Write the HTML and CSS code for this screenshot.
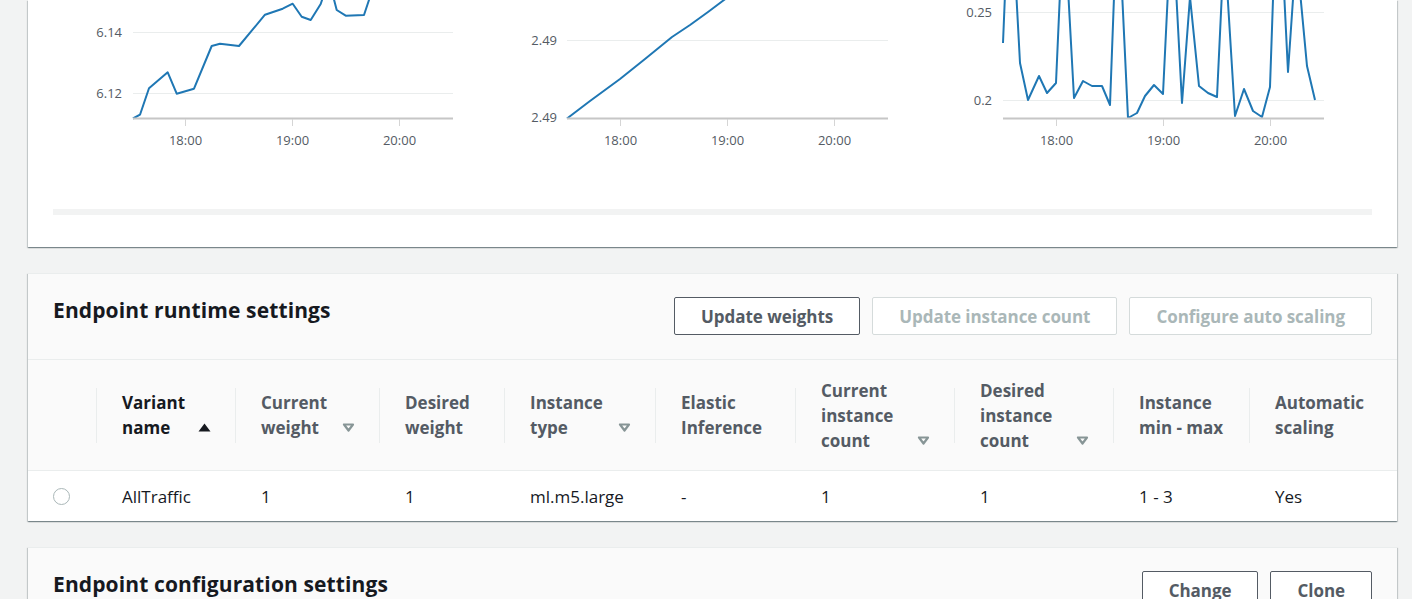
FILE: index.html
```html
<!DOCTYPE html>
<html lang="en">
<head>
<meta charset="utf-8">
<title>Endpoint</title>
<link rel="stylesheet" href="styles.css">
</head>
<body>
<div class="page">
  <section class="card card-metrics">
    <div class="charts">
      <svg class="chart" width="435" height="160" viewBox="53 0 435 160">
        <line class="grid" x1="133" x2="453" y1="32.5" y2="32.5"/>
        <line class="grid" x1="133" x2="453" y1="93.5" y2="93.5"/>
        <text class="ylab" x="122" y="37">6.14</text>
        <text class="ylab" x="122" y="97.5">6.12</text>
        <polyline class="series" points="133,118.5 140,114.7 149,88.3 167.7,72.3 176.7,93.7 194,88.7 211.7,46 220,43.7 239,46 265,14.7 282.7,8.7 292.7,3.7 301.7,16.7 310.7,20 320.7,4 326,-12 331,-12 336.7,10 345.7,15.7 364,15 369,0 373,-20 395,-28 453,-22"/>
        <line class="axis" x1="133" x2="453" y1="118.5" y2="118.5"/>
        <line class="tick" x1="185.5" x2="185.5" y1="119" y2="126"/>
        <line class="tick" x1="292.5" x2="292.5" y1="119" y2="126"/>
        <line class="tick" x1="399.5" x2="399.5" y1="119" y2="126"/>
        <text class="xlab" x="185.5" y="145">18:00</text>
        <text class="xlab" x="292.5" y="145">19:00</text>
        <text class="xlab" x="399.5" y="145">20:00</text>
      </svg>
      <svg class="chart" width="435" height="160" viewBox="488 0 435 160">
        <line class="grid" x1="567" x2="888" y1="40.5" y2="40.5"/>
        <text class="ylab" x="557" y="45">2.49</text>
        <text class="ylab" x="557" y="122">2.49</text>
        <polyline class="series" points="567,118.5 590,101 620,79 645,59 672,37 690,25 708,12 724,0 750,-20 780,-40"/>
        <line class="axis" x1="567" x2="888" y1="118.5" y2="118.5"/>
        <line class="tick" x1="620.5" x2="620.5" y1="119" y2="126"/>
        <line class="tick" x1="727.5" x2="727.5" y1="119" y2="126"/>
        <line class="tick" x1="834.5" x2="834.5" y1="119" y2="126"/>
        <text class="xlab" x="620.5" y="145">18:00</text>
        <text class="xlab" x="727.5" y="145">19:00</text>
        <text class="xlab" x="834.5" y="145">20:00</text>
      </svg>
      <svg class="chart" width="435" height="160" viewBox="923 0 435 160">
        <line class="grid" x1="1003" x2="1324" y1="12.5" y2="12.5"/>
        <line class="grid" x1="1003" x2="1324" y1="100.5" y2="100.5"/>
        <text class="ylab" x="992" y="17">0.25</text>
        <text class="ylab" x="992" y="105">0.2</text>
        <polyline class="series" points="1003,43 1006,-30 1015,-30 1020,63 1028,100 1039,76 1047,93 1056,83 1061,-30 1067,-30 1074,98 1083,81 1092,86 1102,86 1110,105 1115,-30 1121,-30 1128,118 1137,113 1145,96 1154,85 1163,94 1169,-30 1175,-30 1182,103 1190,-3 1199,86 1208,93 1217,97 1223,-30 1226,-30 1235,116 1244,89 1253,111 1262,117 1270,87 1274,-30 1283,-30 1288,72 1295,-30 1298,-30 1307,66 1315,100"/>
        <line class="axis" x1="1003" x2="1324" y1="118.5" y2="118.5"/>
        <line class="tick" x1="1056.5" x2="1056.5" y1="119" y2="126"/>
        <line class="tick" x1="1163.5" x2="1163.5" y1="119" y2="126"/>
        <line class="tick" x1="1270.5" x2="1270.5" y1="119" y2="126"/>
        <text class="xlab" x="1056.5" y="145">18:00</text>
        <text class="xlab" x="1163.5" y="145">19:00</text>
        <text class="xlab" x="1270.5" y="145">20:00</text>
      </svg>
    </div>
    <div class="hscroll"></div>
  </section>

  <section class="card">
    <header class="card-head">
      <h2 class="card-title">Endpoint runtime settings</h2>
      <div class="actions">
        <button class="btn">Update weights</button>
        <button class="btn btn-disabled">Update instance count</button>
        <button class="btn btn-disabled">Configure auto scaling</button>
      </div>
    </header>
    <div class="table">
      <div class="row head-row">
        <div class="th th-select"></div>
        <div class="th sorted"><span class="th-label">Variant<br>name</span><svg class="sort" width="13" height="9" viewBox="0 0 13 9"><path d="M6.5 0.5 L12.5 8.5 H0.5 Z" fill="#16191f"/></svg></div>
        <div class="th"><span class="th-label">Current<br>weight</span><svg class="sort" width="13" height="9" viewBox="0 0 13 9"><path d="M2 1.5 H11 L6.5 7.5 Z" fill="none" stroke="#879596" stroke-width="2.2" stroke-linejoin="round"/></svg></div>
        <div class="th"><span class="th-label">Desired<br>weight</span></div>
        <div class="th"><span class="th-label">Instance<br>type</span><svg class="sort" width="13" height="9" viewBox="0 0 13 9"><path d="M2 1.5 H11 L6.5 7.5 Z" fill="none" stroke="#879596" stroke-width="2.2" stroke-linejoin="round"/></svg></div>
        <div class="th"><span class="th-label">Elastic<br>Inference</span></div>
        <div class="th"><span class="th-label">Current<br>instance<br>count</span><svg class="sort" width="13" height="9" viewBox="0 0 13 9"><path d="M2 1.5 H11 L6.5 7.5 Z" fill="none" stroke="#879596" stroke-width="2.2" stroke-linejoin="round"/></svg></div>
        <div class="th"><span class="th-label">Desired<br>instance<br>count</span><svg class="sort" width="13" height="9" viewBox="0 0 13 9"><path d="M2 1.5 H11 L6.5 7.5 Z" fill="none" stroke="#879596" stroke-width="2.2" stroke-linejoin="round"/></svg></div>
        <div class="th"><span class="th-label">Instance<br>min - max</span></div>
        <div class="th"><span class="th-label">Automatic<br>scaling</span></div>
      </div>
      <div class="row body-row">
        <div class="td td-select"><span class="radio"></span></div>
        <div class="td">AllTraffic</div>
        <div class="td">1</div>
        <div class="td">1</div>
        <div class="td">ml.m5.large</div>
        <div class="td">-</div>
        <div class="td">1</div>
        <div class="td">1</div>
        <div class="td">1 - 3</div>
        <div class="td">Yes</div>
      </div>
    </div>
  </section>

  <section class="card">
    <header class="card-head">
      <h2 class="card-title">Endpoint configuration settings</h2>
      <div class="actions">
        <button class="btn">Change</button>
        <button class="btn">Clone</button>
      </div>
    </header>
  </section>
</div>
</body>
</html>
```

FILE: styles.css
```css
html, body {
  margin: 0;
  padding: 0;
  overflow: hidden;
  background: #f2f3f3;
  font-family: "Open Sans", "Noto Sans", sans-serif;
  color: #16191f;
}

.page {
  padding: 0 15px 40px 28px;
}

.card {
  background: #ffffff;
  border-top: 1px solid #eaeded;
  box-shadow: 0 1px 1px 0 rgba(0, 28, 36, 0.3), 1px 1px 1px 0 rgba(0, 28, 36, 0.15), -1px 1px 1px 0 rgba(0, 28, 36, 0.15);
  margin-bottom: 26px;
}

.card-metrics {
  border-top: 0;
  padding: 0 25px 32px;
}

.charts {
  display: flex;
  height: 160px;
}

.chart {
  display: block;
  flex: none;
}

.chart .grid {
  stroke: #eaeded;
  stroke-width: 1;
}

.chart .axis {
  stroke: #c6c6c6;
  stroke-width: 2;
}

.chart .tick {
  stroke: #d5d5d5;
  stroke-width: 1;
}

.chart .series {
  fill: none;
  stroke: #1f77b4;
  stroke-width: 2;
  stroke-linejoin: round;
}

.chart text {
  font-family: "Open Sans", "Noto Sans", sans-serif;
  font-size: 13px;
  fill: #545b64;
}

.chart .ylab {
  text-anchor: end;
}

.chart .xlab {
  text-anchor: middle;
}

.hscroll {
  height: 6px;
  margin-top: 49px;
  background: #f2f3f3;
}

.card-head {
  display: flex;
  justify-content: space-between;
  align-items: flex-start;
  padding: 23px 25px 24px;
  background: #fafafa;
  border-bottom: 1px solid #eaeded;
}

.card-title {
  margin: 0;
  font-size: 21px;
  letter-spacing: 0.12px;
  line-height: 26px;
  font-weight: 700;
  color: #16191f;
}

.actions {
  display: flex;
  gap: 12px;
}

.btn {
  height: 38px;
  padding: 0 26px;
  border: 1px solid #545b64;
  border-radius: 2px;
  background: #ffffff;
  color: #545b64;
  font-family: "Open Sans", "Noto Sans", sans-serif;
  font-size: 17px;
  font-weight: 700;
  letter-spacing: -0.05px;
  white-space: nowrap;
}

.btn-disabled {
  border-color: #d5dbdb;
  color: #aab7b8;
}

.row {
  display: grid;
  grid-template-columns: 68px 139px 144px 125px 151px 140px 159px 159px 136px 148px;
}

.head-row {
  height: 110px;
  background: #fafafa;
  border-bottom: 1px solid #eaeded;
}

.th {
  position: relative;
  display: flex;
  align-items: flex-end;
  justify-content: space-between;
  align-self: center;
  padding: 0 24px 0 26px;
  font-size: 17px;
  font-weight: 700;
  line-height: 25px;
  color: #545b64;
}

.th::before {
  content: "";
  position: absolute;
  left: 0;
  top: 50%;
  width: 1px;
  height: 55px;
  margin-top: -27px;
  background: #eaeded;
}

.th-select::before {
  display: none;
}

.th.sorted {
  color: #16191f;
}

.sort {
  display: block;
  flex: none;
  margin-bottom: 8px;
}

.body-row {
  height: 50px;
  background: #ffffff;
}

.td {
  display: flex;
  align-items: center;
  padding-left: 26px;
  font-size: 17px;
  color: #16191f;
}

.td-select {
  padding-left: 25px;
}

.radio {
  display: block;
  width: 17px;
  height: 17px;
  box-sizing: border-box;
  border: 1.5px solid #aab7b8;
  border-radius: 50%;
  background: #ffffff;
}
```
